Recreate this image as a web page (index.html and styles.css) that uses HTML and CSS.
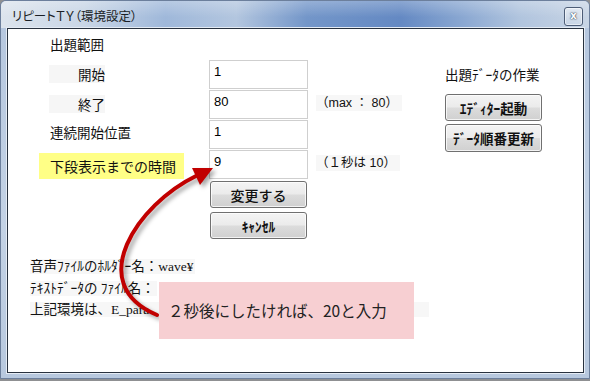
FILE: index.html
```html
<!DOCTYPE html>
<html lang="ja">
<head>
  <meta charset="UTF-8" />
  <title>リピートＴＹ（環境設定）</title>
  <link rel="stylesheet" href="styles.css">
</head>
<body>

  <div class="window">
    <div class="titlebar">
      <span class="title">リピートＴＹ（環境設定）</span>
      <span class="close">x</span>
    </div>

    <div class="client">
      <div class="panel">
        <div class="form">
          <div class="heading">出題範囲</div>
          <div class="row">
            <span class="label sub">開始</span>
            <span class="field">1</span>
          </div>
          <div class="row">
            <span class="label sub">終了</span>
            <span class="field">80</span>
            <span class="note">（max ： 80）</span>
          </div>
          <div class="row">
            <span class="label">連続開始位置</span>
            <span class="field">1</span>
          </div>
          <div class="row">
            <span class="label mark">下段表示までの時間</span>
            <span class="field">9</span>
            <span class="note">（１秒は 10）</span>
          </div>
          <div class="actions">
            <button class="btn big">変更する</button>
            <button class="btn">ｷｬﾝｾﾙ</button>
          </div>
        </div>

        <div class="side">
          <div class="side-title">出題ﾃﾞｰﾀの作業</div>
          <button class="btn">ｴﾃﾞｨﾀｰ起動</button>
          <button class="btn">ﾃﾞｰﾀ順番更新</button>
        </div>
      </div>

      <div class="info">
        <p><span class="line">音声ﾌｧｲﾙのﾎﾙﾀﾞｰ名：wave¥</span></p>
        <p><span class="line">ﾃｷｽﾄﾃﾞｰﾀの ﾌｧｲﾙ名：</span></p>
        <p><span class="line long">上記環境は、E_para</span></p>
      </div>

      <!-- annotation -->
      <svg class="arrow" width="575" height="343" viewBox="0 0 575 343">
        <path d="M149 286 C75 255, 130 175, 188 147" fill="none" stroke="#c10000" stroke-width="4" stroke-linecap="round" />
        <polygon points="205,139 184,139 192,156" fill="#c10000" />
      </svg>
      <div class="callout">２秒後にしたければ、20と入力</div>
    </div>
  </div>

</body>
</html>
```

FILE: styles.css
```css
body {
  margin: 0;
  background: #8f9092;
  font-family: "Noto Sans CJK JP", sans-serif;
  color: #111;
}

.window {
  width: 590px;
  height: 379px;
  box-sizing: border-box;
  padding: 0 5px 5px 6px;
  background: linear-gradient(to bottom, #b4c6de, #c3d2e5 60%, #b7c8de);
  border: 1px solid #6c7f9c;
  border-radius: 6px 6px 0 0;
}

.titlebar {
  height: 27px;
  margin: 0 -5px 0 -6px;
  padding: 0 6px 0 11px;
  display: flex;
  align-items: center;
  justify-content: space-between;
  border-radius: 5px 5px 0 0;
  background:
    linear-gradient(to bottom, rgba(255,255,255,0.25), rgba(255,255,255,0) 60%),
    linear-gradient(to right, #dce4ed 0%, #c9d6e6 14%, #9fb8da 28%, #b3c6df 40%, #7396c9 52%, #6489c3 68%, #88a6d1 78%, #b0c4de 88%, #c8d5e5 100%);
}

.title {
  font-size: 12.5px;
  color: #1b1f26;
  font-feature-settings: "palt";
  padding-top: 2px;
}

.close {
  width: 17px;
  height: 17px;
  margin-top: 4px;
  border: 1px solid #4d5d77;
  border-radius: 3px;
  background: linear-gradient(to bottom, rgba(255,255,255,0.45), rgba(255,255,255,0.1));
  box-shadow: inset 0 0 0 1px rgba(255,255,255,0.5);
  color: #fff;
  font: bold 10px/16px "DejaVu Sans", sans-serif;
  text-align: center;
  text-shadow: 0 0 2px #2c3a52, 0 0 1px #2c3a52;
}

.client {
  position: relative;
  width: 577px;
  height: 345px;
  box-sizing: border-box;
  border: 1px solid #28323f;
  background: #fff;
  box-shadow: 0 0 0 1px #e4ebf4;
}

.panel {
  display: flex;
  padding-left: 31px;
}

.form {
  width: 406px;
}

.heading {
  height: 31px;
  line-height: 31px;
  padding-left: 11px;
  font-size: 13.5px;
}

.row {
  display: flex;
  align-items: flex-start;
  height: 30px;
}

.label {
  width: 145px;
  margin-right: 25px;
  box-sizing: border-box;
  padding-left: 11px;
  margin-top: 3px;
  line-height: 18px;
  font-size: 13.5px;
}

.label.sub {
  width: 56px;
  margin-left: 10px;
  margin-right: 104px;
  padding-left: 29px;
  margin-top: 5px;
  background: #f6f6f6;
}

.label.mark {
  height: 26px;
  line-height: 26px;
  margin-top: 3px;
  background: #ffff86;
  font-size: 14px;
}

.field {
  width: 99px;
  height: 29px;
  box-sizing: border-box;
  border: 1px solid #cfcfcf;
  padding: 2px 4px;
  font: 13px/18px "Liberation Sans", sans-serif;
  color: #000;
}

.note {
  margin-left: 8px;
  margin-top: 5px;
  padding: 0 4px 0 0;
  line-height: 16px;
  font-family: "Liberation Sans", "Noto Sans CJK JP", sans-serif;
  font-size: 12.5px;
  background: #f7f7f7;
  white-space: nowrap;
}

.actions {
  display: flex;
  flex-direction: column;
  gap: 4px;
  width: 97px;
  margin: 1px 0 0 171px;
}

.btn {
  display: block;
  width: 97px;
  height: 27px;
  padding: 0;
  border: 1px solid #707070;
  border-radius: 3px;
  background: linear-gradient(to bottom, #f4f4f4 0%, #ebebeb 48%, #dcdcdc 52%, #d0d0d0 100%);
  box-shadow: inset 0 0 0 1px rgba(255,255,255,0.75);
  font-family: "Noto Sans CJK JP", sans-serif;
  font-size: 13.5px;
  font-weight: bold;
  color: #111;
}

.btn.big {
  font-size: 14px;
  font-weight: 500;
}

.side {
  width: 97px;
  padding-top: 35px;
}

.side-title {
  height: 20px;
  line-height: 20px;
  font-size: 13.5px;
  margin-bottom: 10px;
  white-space: nowrap;
}

.side .btn + .btn {
  margin-top: 3px;
  height: 28px;
}

.info {
  margin-top: 17px;
  padding-left: 22px;
  font-family: "Liberation Serif", "Noto Sans CJK JP", serif;
  font-size: 13.5px;
}

.info p {
  margin: 0;
  line-height: 21.5px;
}

.line {
  background: #f7f7f7;
  padding-right: 2px;
}

.line.long {
  padding-right: 280px;
}

.arrow {
  position: absolute;
  left: 0;
  top: 0;
  filter: drop-shadow(3px 3px 2px rgba(0,0,0,0.35));
}

.callout {
  position: absolute;
  left: 151px;
  top: 253px;
  width: 255px;
  height: 57px;
  box-sizing: border-box;
  padding-left: 9px;
  line-height: 57px;
  background: #f7cfd2;
  font-size: 15.5px;
  color: #222;
  white-space: nowrap;
}
```
